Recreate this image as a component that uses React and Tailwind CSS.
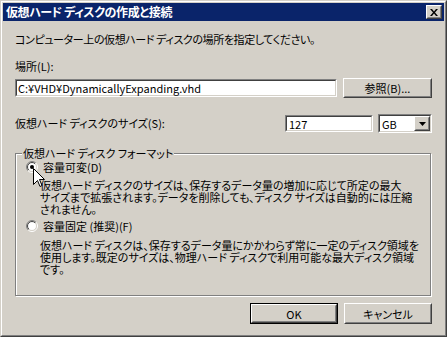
import React from "react";

const font = "[font-family:'Noto_Sans_CJK_JP','Noto_Sans',sans-serif] [font-feature-settings:'palt']";

// 3D raised button (Windows classic)
function Btn({ children, className = "", isDefault = false }) {
  return (
    <div className={`${isDefault ? "border border-black" : ""} ${className}`}>
      <div className="h-full w-full border border-t-white border-l-white border-r-[#404040] border-b-[#404040] bg-[#d4d0c8]">
        <div className="h-full w-full border border-t-[#d4d0c8] border-l-[#d4d0c8] border-r-[#808080] border-b-[#808080] flex items-center justify-center text-[11px] leading-[12px]">
          {children}
        </div>
      </div>
    </div>
  );
}

function Sunken({ children, className = "" }) {
  return (
    <div className={`border border-t-[#808080] border-l-[#808080] border-r-white border-b-white ${className}`}>
      <div className="h-full w-full border border-t-[#404040] border-l-[#404040] border-r-[#d4d0c8] border-b-[#d4d0c8] bg-white flex items-center">
        {children}
      </div>
    </div>
  );
}

function Radio({ checked }) {
  return (
    <svg width="12" height="12" viewBox="0 0 12 12" className="shrink-0">
      <defs>
        <linearGradient id="ro" x1="0" y1="0" x2="1" y2="1">
          <stop offset="0.5" stopColor="#808080" />
          <stop offset="0.5" stopColor="#ffffff" />
        </linearGradient>
        <linearGradient id="ri" x1="0" y1="0" x2="1" y2="1">
          <stop offset="0.5" stopColor="#404040" />
          <stop offset="0.5" stopColor="#d4d0c8" />
        </linearGradient>
      </defs>
      <circle cx="6" cy="6" r="5.5" fill="none" stroke="url(#ro)" strokeWidth="1" />
      <circle cx="6" cy="6" r="4.5" fill="#fff" stroke="url(#ri)" strokeWidth="1" />
      {checked && <circle cx="6" cy="6" r="2" fill="#000" />}
    </svg>
  );
}

export default function App() {
  return (
    <div className={`w-[447px] h-[337px] bg-[#d4d0c8] border border-t-[#d4d0c8] border-l-[#d4d0c8] border-r-[#404040] border-b-[#404040] text-black ${font}`}>
      <div className="h-full w-full border border-t-white border-l-white border-r-[#808080] border-b-[#808080] p-px flex flex-col">
        {/* title bar */}
        <div className="h-[18px] bg-[#0a246a] flex items-center justify-between pl-[3px] pr-[2px]">
          <span className="text-white font-bold text-[12px] leading-[12px] tracking-[-0.4px]">仮想ハード ディスクの作成と接続</span>
          <Btn className="w-[16px] h-[14px]">
            <svg width="8" height="7" viewBox="0 0 8 7">
              <path d="M0 0h2l2 2.5L6 0h2L5 3.5 8 7H6L4 4.5 2 7H0l3-3.5z" fill="#000" />
            </svg>
          </Btn>
        </div>

        <div className="flex flex-col pl-[12px] pr-[12px] text-[11px] leading-[13px]">
          <p className="mt-[12px] whitespace-nowrap tracking-[-0.4px]">コンピューター上の仮想ハード ディスクの場所を指定してください。</p>
          <p className="mt-[14px]">場所(L):</p>

          <div className="mt-[5px] flex items-start gap-[6px]">
            <Sunken className="w-[322px] h-[18px] mt-px">
              <span className="pl-[1px] text-[11px] leading-[12px] [font-feature-settings:normal]">C:¥VHD¥DynamicallyExpanding.vhd</span>
            </Sunken>
            <Btn className="w-[89px] h-[20px]">参照(B)...</Btn>
          </div>

          <div className="mt-[16px] flex items-center h-[19px]">
            <span className="flex-1">仮想ハード ディスクのサイズ(S):</span>
            <Sunken className="w-[88px] h-[17px]">
              <span className="pl-[2px] text-[11px] leading-[12px]">127</span>
            </Sunken>
            <Sunken className="ml-[5px] w-[54px] h-[19px]">
              <span className="pl-[2px] flex-1 text-[11px] leading-[12px]">GB</span>
              <Btn className="w-[16px] h-[15px]">
                <svg width="7" height="4" viewBox="0 0 7 4">
                  <path d="M0 0h7L3.5 4z" fill="#000" />
                </svg>
              </Btn>
            </Sunken>
          </div>

          {/* group box */}
          <div className="relative mt-[20px] mr-px h-[143px] border border-[#808080] shadow-[inset_1px_1px_0_#fff,1px_1px_0_#fff] pl-[10px] pt-[7px]">
            <span className="absolute -top-[7px] left-[6px] px-px bg-[#d4d0c8] leading-[13px] whitespace-nowrap">仮想ハード ディスク フォーマット</span>

            <div className="flex items-center gap-[5px] h-[12px] leading-[12px]">
              <Radio checked />
              <span>容量可変(D)</span>
            </div>
            <p className="mt-[6px] pl-[14px] leading-[12px] whitespace-nowrap">
              仮想ハード ディスクのサイズは、保存するデータ量の増加に応じて所定の最大<br />
              サイズまで拡張されます。データを削除しても、ディスク サイズは自動的には圧縮<br />
              されません。
            </p>

            <div className="mt-[5px] flex items-center gap-[5px] h-[12px] leading-[12px]">
              <Radio />
              <span>容量固定 (推奨)(F)</span>
            </div>
            <p className="mt-[7px] pl-[14px] leading-[12px] whitespace-nowrap">
              仮想ハード ディスクは、保存するデータ量にかかわらず常に一定のディスク領域を<br />
              使用します。既定のサイズは、物理ハード ディスクで利用可能な最大ディスク領域<br />
              です。
            </p>

            {/* mouse cursor over the first radio */}
            <svg className="absolute left-[17px] top-[14px]" width="12" height="20" viewBox="0 0 12 20">
              <path d="M0.5 0.5V16.5L4.5 12.5L7 18.5L9 17.5L6.5 11.5H11.5Z" fill="#fff" stroke="#000" strokeWidth="1" />
            </svg>
          </div>

          <div className="mt-[7px] flex justify-end gap-[6px]">
            <Btn isDefault className="w-[88px] h-[21px]">OK</Btn>
            <Btn className="w-[88px] h-[21px]">キャンセル</Btn>
          </div>
        </div>
      </div>
    </div>
  );
}
